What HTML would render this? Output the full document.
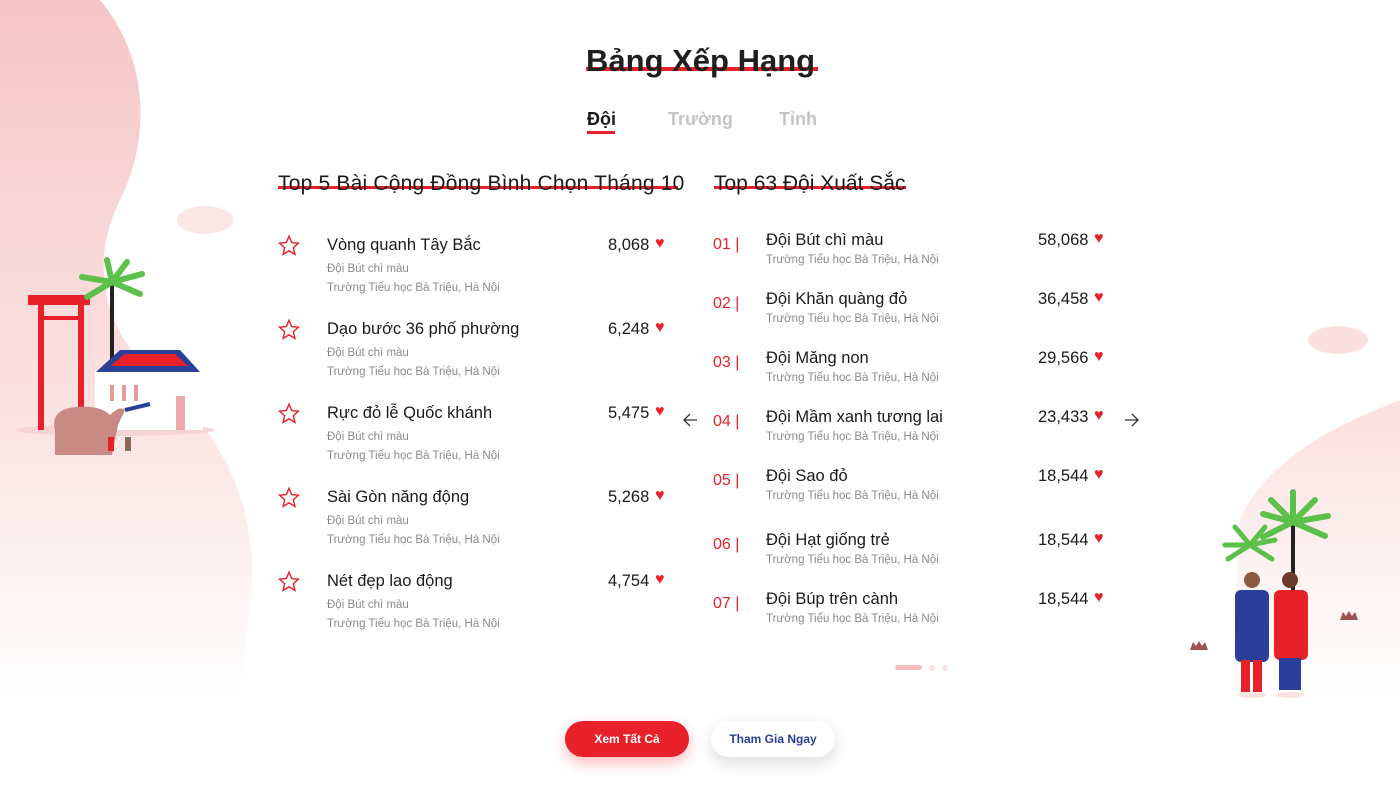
<!DOCTYPE html>
<html><head><meta charset="utf-8"><style>
*{margin:0;padding:0;box-sizing:border-box}
body{width:1400px;height:788px;position:relative;overflow:hidden;background:#fff;font-family:"Liberation Sans",sans-serif;color:#1a1a1a}
.a{position:absolute;white-space:nowrap}
.t{font-size:16.5px;font-weight:500}
.s{font-size:11.5px;color:#8a8a8a}
.n{font-size:16.5px}
.h{color:#e8202a;font-size:16px}
.r{color:#e8202a;font-size:16px}
.ul{position:absolute;height:4px;background:#e8202a}
</style></head><body>
<svg class="a" style="left:0;top:0" width="1400" height="788">
<defs>
<linearGradient id="g1" x1="0" y1="0" x2="0" y2="1"><stop offset="0" stop-color="#f6c6c6"/><stop offset="0.6" stop-color="#fbe3e3"/><stop offset="1" stop-color="#fff"/></linearGradient>
<linearGradient id="g2" x1="0" y1="0" x2="0" y2="1"><stop offset="0" stop-color="#fbe0e0"/><stop offset="1" stop-color="#fff"/></linearGradient>
</defs>
<path d="M0 0 L100 0 C150 60 150 140 120 200 C90 260 100 330 160 380 C230 440 260 520 250 600 L240 700 L0 700 Z" fill="url(#g1)"/>
<path d="M1400 400 C1320 430 1260 470 1240 520 L1230 700 L1400 700 Z" fill="url(#g2)"/>
<ellipse cx="205" cy="220" rx="28" ry="14" fill="#fbe6e6"/>
<ellipse cx="1338" cy="340" rx="30" ry="14" fill="#fbe0e0"/>
<ellipse cx="115" cy="430" rx="100" ry="6" fill="#f7d4d4"/>
<rect x="38" y="305" width="6" height="125" fill="#e8202a"/><rect x="78" y="305" width="6" height="125" fill="#e8202a"/>
<rect x="28" y="295" width="62" height="10" fill="#e8202a"/><rect x="38" y="316" width="46" height="4" fill="#e8202a"/>
<rect x="110" y="280" width="4" height="80" fill="#222"/>
<path d="M112 282 l-30 -5 M112 282 l-25 15 M112 282 l30 -8 M112 282 l28 12 M112 282 l-5 -22 M112 282 l15 -20" stroke="#5cc04a" stroke-width="6" stroke-linecap="round"/>
<rect x="95" y="370" width="108" height="60" fill="#fff"/>
<path d="M96 372 L120 350 L180 350 L200 372 Z" fill="#2a3f9a"/><path d="M110 366 L125 354 L175 354 L188 366Z" fill="#e8202a"/>
<rect x="110" y="385" width="4" height="16" fill="#e89a9a"/><rect x="122" y="385" width="4" height="16" fill="#e89a9a"/><rect x="134" y="385" width="4" height="16" fill="#e89a9a"/><rect x="176" y="396" width="9" height="34" fill="#eaa"/>
<path d="M55 430 Q50 410 75 407 Q100 405 110 415 Q120 405 125 410 L118 425 L112 455 L55 455 Z" fill="#c98a86"/>
<path d="M125 410 l25 -6" stroke="#2a3f9a" stroke-width="4"/>
<rect x="108" y="437" width="6" height="14" fill="#e8202a"/><rect x="125" y="437" width="6" height="14" fill="#8a6a5a"/>
<rect x="1291" y="520" width="4" height="70" fill="#222"/>
<path d="M1293 522 l-30 -8 M1293 522 l-30 15 M1293 522 l35 -6 M1293 522 l32 14 M1293 522 l0 -30 M1293 522 l-22 -22 M1293 522 l22 -22" stroke="#5cc04a" stroke-width="6" stroke-linecap="round"/>
<path d="M1250 545 l-25 0 M1250 545 l25 -5 M1250 545 l-15 -18 M1250 545 l15 -18 M1250 545 l-22 14 M1250 545 l22 14" stroke="#5cc04a" stroke-width="5" stroke-linecap="round"/>
<circle cx="1252" cy="580" r="8" fill="#8a5a40"/><circle cx="1290" cy="580" r="8" fill="#6a3a2a"/>
<rect x="1235" y="590" width="34" height="72" rx="6" fill="#2a3f9a"/>
<rect x="1241" y="660" width="9" height="32" fill="#e8202a"/><rect x="1253" y="660" width="9" height="32" fill="#e8202a"/>
<rect x="1274" y="590" width="34" height="70" rx="6" fill="#e8202a"/>
<rect x="1279" y="658" width="22" height="32" fill="#2a3f9a"/>
<ellipse cx="1252" cy="695" rx="14" ry="3" fill="#fbe0e0"/><ellipse cx="1290" cy="695" rx="14" ry="3" fill="#fbe0e0"/>
<path d="M1190 650 l3 -8 3 4 3 -5 3 5 3 -4 3 8 Z" fill="#a05050"/>
<path d="M1340 620 l3 -8 3 4 3 -5 3 5 3 -4 3 8 Z" fill="#a05050"/>
<rect x="895" y="665" width="27" height="5" rx="2.5" fill="#f4bcbc"/><circle cx="932" cy="668" r="3" fill="#fbe3e3"/><circle cx="945" cy="668" r="3" fill="#fbe3e3"/>
<path d="M697 420 H684 M690 414 L684 420 L690 426" stroke="#333" stroke-width="1.3" fill="none"/>
<path d="M1125 420 H1138 M1132 414 L1138 420 L1132 426" stroke="#333" stroke-width="1.3" fill="none"/>
</svg>

<div class="ul" style="left:586px;top:67px;width:232px"></div>
<div class="a" style="left:586px;top:43px;font-size:31px;font-weight:700;color:#1f1f1f">Bảng Xếp Hạng</div>
<div class="a" style="left:587px;top:109px;font-size:18px;font-weight:700">Đội</div>
<div class="ul" style="left:587px;top:131px;width:28px;height:3px"></div>
<div class="a" style="left:668px;top:109px;font-size:18px;font-weight:700;color:#c4c4c4">Trường</div>
<div class="a" style="left:779px;top:109px;font-size:18px;font-weight:700;color:#c4c4c4">Tỉnh</div>

<div class="ul" style="left:278px;top:186px;width:400px;height:3px"></div>
<div class="a" style="left:278px;top:172px;font-size:21px;font-weight:500;letter-spacing:0.2px">Top 5 Bài Cộng Đồng Bình Chọn Tháng 10</div>
<div class="ul" style="left:714px;top:186px;width:192px;height:3px"></div>
<div class="a" style="left:714px;top:172px;font-size:21px;font-weight:500">Top 63 Đội Xuất Sắc</div>

<div id="L"></div>
<script>
var L=["Vòng quanh Tây Bắc|8,068","Dạo bước 36 phố phường|6,248","Rực đỏ lễ Quốc khánh|5,475","Sài Gòn năng động|5,268","Nét đẹp lao động|4,754"],h="";
L.forEach(function(x,i){var p=x.split("|"),y=236+i*84;
h+='<svg class="a" style="left:275px;top:'+(y-4)+'px" width="28" height="28" viewBox="0 0 26 26"><path d="M13 4 L15.5 9.8 21.8 10.4 17 14.6 18.5 20.8 13 17.5 7.5 20.8 9 14.6 4.2 10.4 10.5 9.8Z" fill="none" stroke="#e8202a" stroke-width="1.3"/></svg>';
h+='<div class="a t" style="left:327px;top:'+y+'px">'+p[0]+'</div><div class="a s" style="left:327px;top:'+(y+27)+'px">Đội Bút chì màu</div><div class="a s" style="left:327px;top:'+(y+46)+'px">Trường Tiểu học Bà Triệu, Hà Nội</div><div class="a n" style="left:608px;top:'+y+'px">'+p[1]+'</div><div class="a h" style="left:655px;top:'+(y-1)+'px">♥</div>';});
var R=["Đội Bút chì màu|58,068|231","Đội Khăn quàng đỏ|36,458|290","Đội Măng non|29,566|349","Đội Mầm xanh tương lai|23,433|408","Đội Sao đỏ|18,544|467","Đội Hạt giống trẻ|18,544|531","Đội Búp trên cành|18,544|590"];
R.forEach(function(x,i){var p=x.split("|"),y=+p[2];
h+='<div class="a r" style="left:713px;top:'+(y+5)+'px">0'+(i+1)+' |</div><div class="a t" style="left:766px;top:'+y+'px">'+p[0]+'</div><div class="a s" style="left:766px;top:'+(y+23)+'px">Trường Tiểu học Bà Triệu, Hà Nội</div><div class="a n" style="left:1038px;top:'+y+'px">'+p[1]+'</div><div class="a h" style="left:1094px;top:'+(y-1)+'px">♥</div>';});
document.getElementById("L").innerHTML=h;
</script>

<div class="a" style="left:565px;top:721px;width:124px;height:36px;border-radius:18px;background:#e8202a;color:#fff;font-size:12px;font-weight:700;text-align:center;line-height:36px;box-shadow:0 6px 14px rgba(232,32,42,.3)">Xem Tất Cả</div>
<div class="a" style="left:711px;top:721px;width:124px;height:36px;border-radius:18px;background:#fff;color:#2a3f9a;font-size:12px;font-weight:700;text-align:center;line-height:36px;box-shadow:0 6px 16px rgba(0,0,0,.14)">Tham Gia Ngay</div>
</body></html>
